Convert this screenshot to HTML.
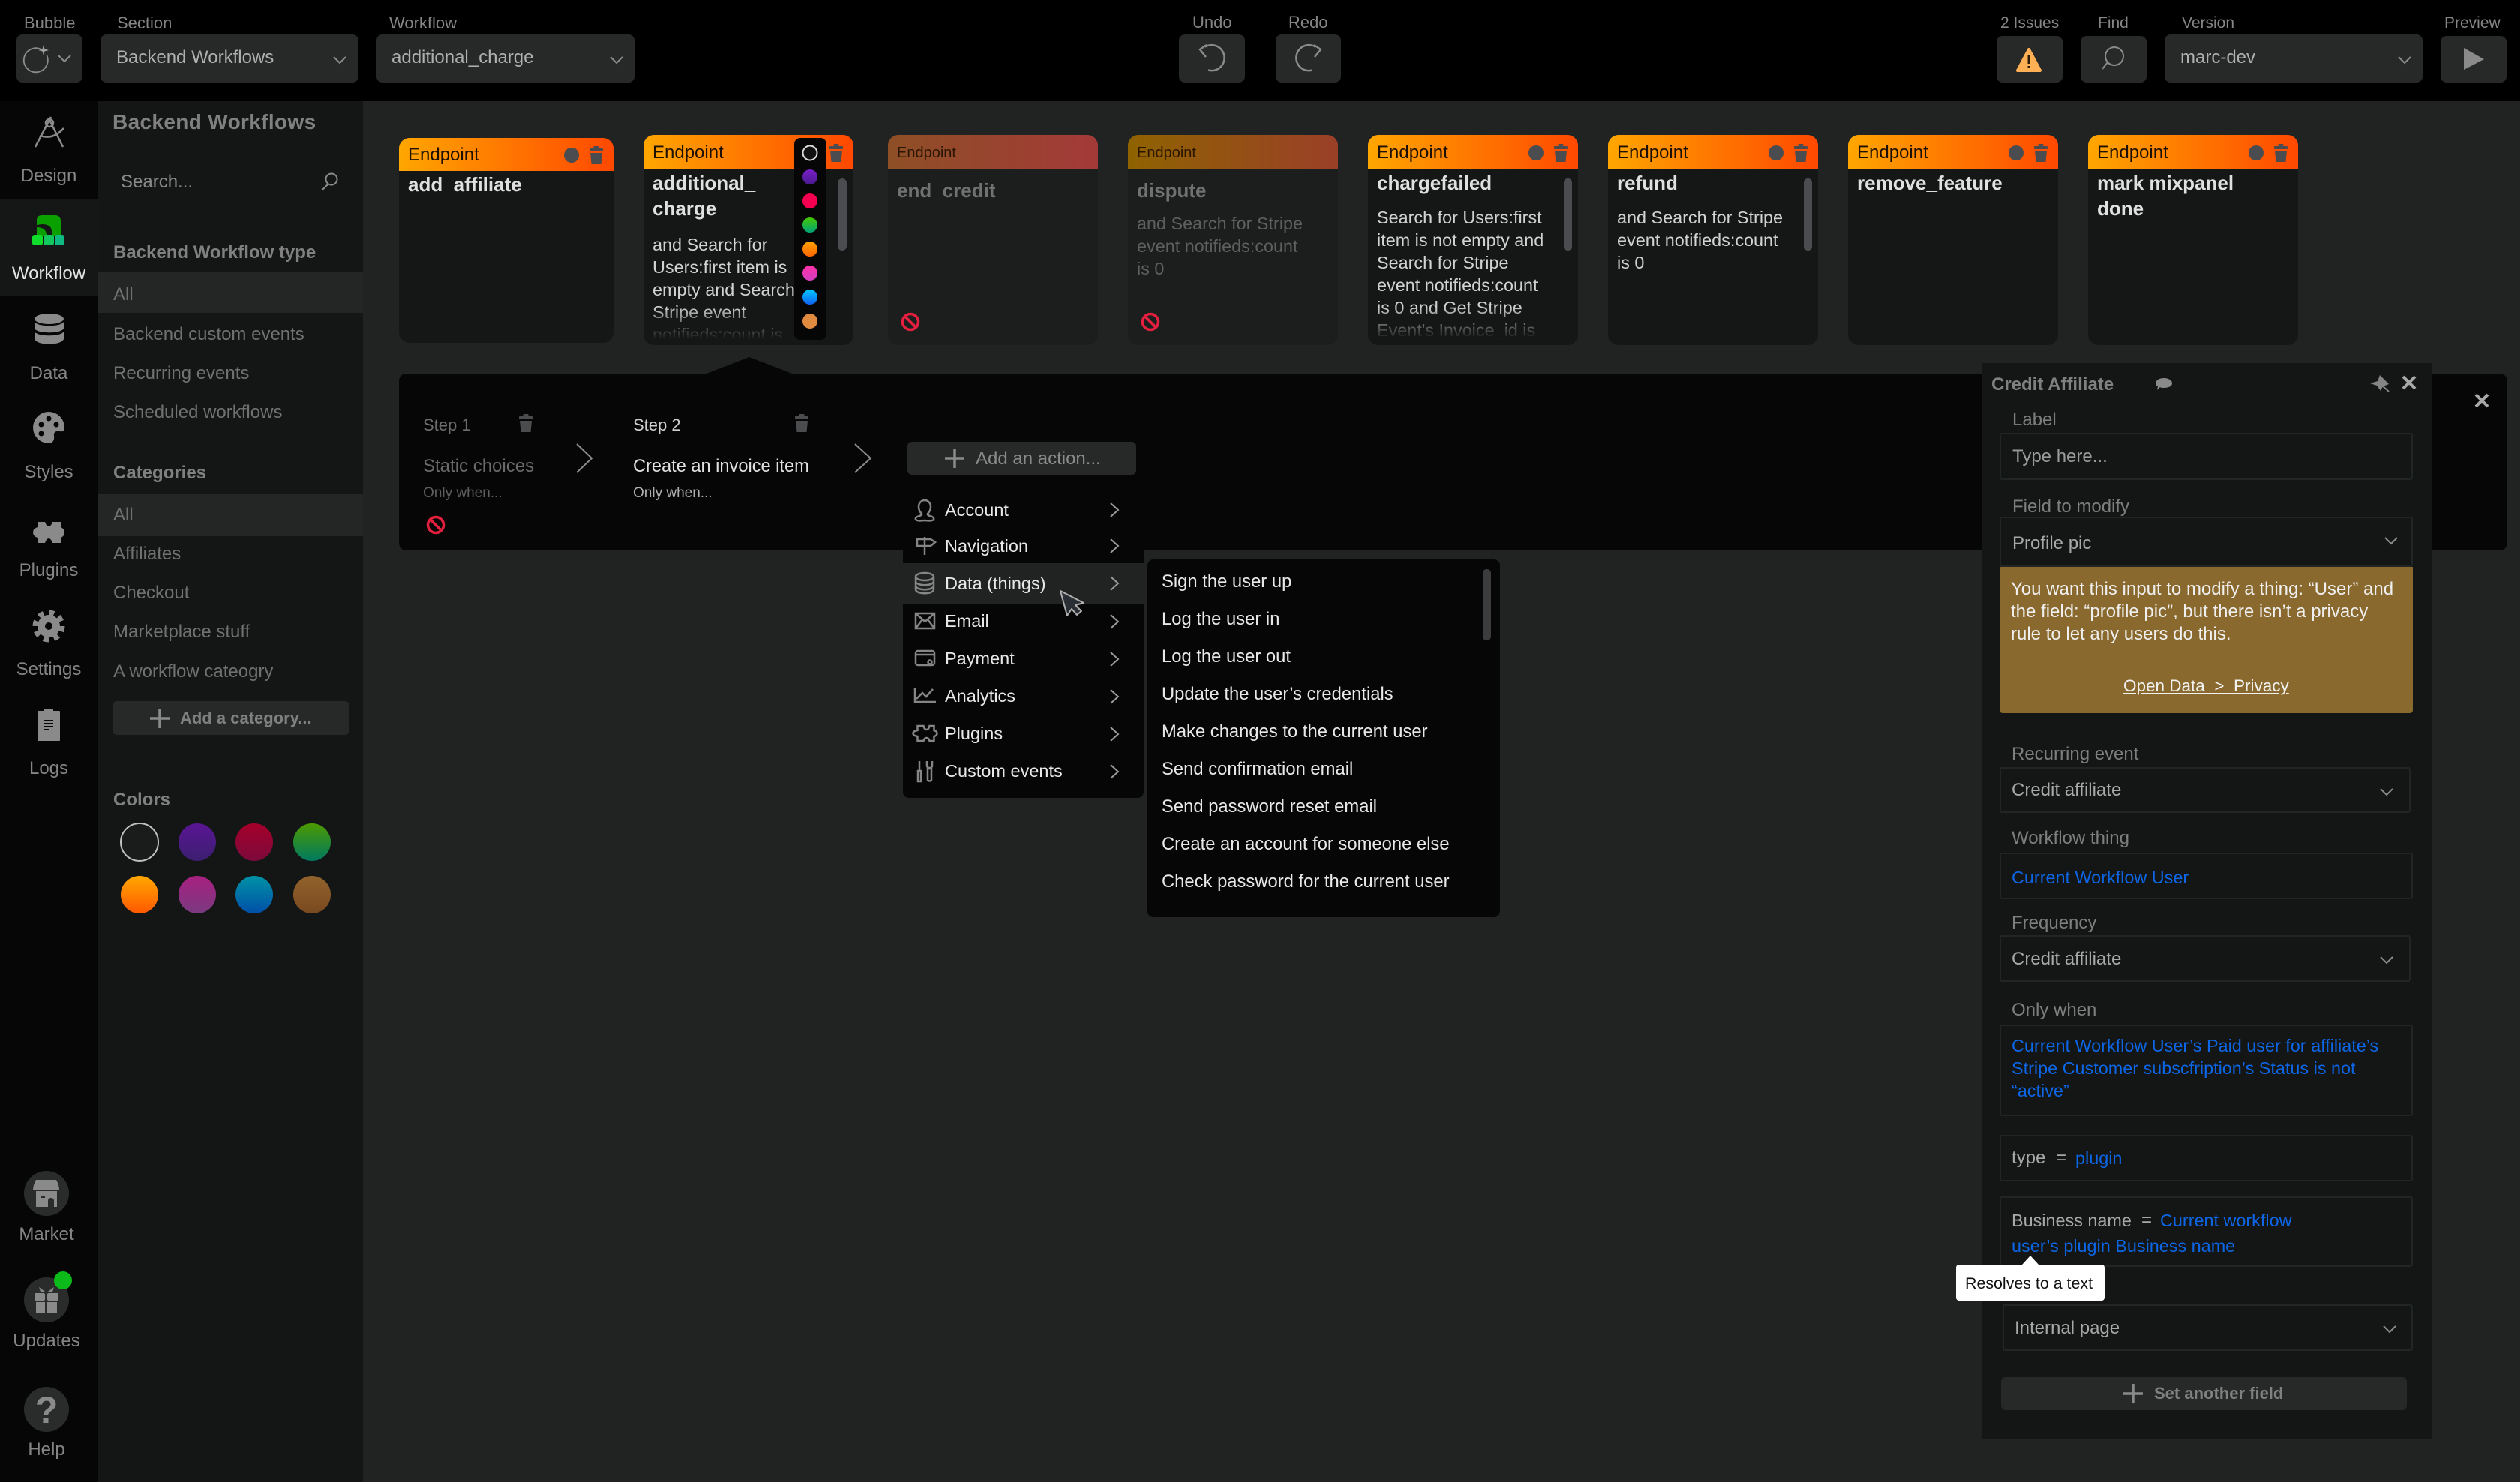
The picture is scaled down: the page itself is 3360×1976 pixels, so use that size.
<!DOCTYPE html>
<html lang="en"><head><meta charset="utf-8"><title>Backend Workflows</title>
<style>
html,body{margin:0;padding:0;width:3360px;height:1976px;overflow:hidden;background:#212323}
body{position:relative;font-family:"Liberation Sans",sans-serif;font-size:24px;color:#8a8a8a}
.b{position:absolute;box-sizing:border-box}
.t{position:absolute;white-space:nowrap;line-height:30px;font-size:24px;margin-top:1px}
.lb{font-size:22px;color:#858585}
.sel{background:#272929;border-radius:8px}
.side{color:#858585;text-align:center;left:0;width:130px}
.li{color:#707272;left:151px}
.h{font-weight:bold;color:#808080}
.card{position:absolute;background:#151717;border-radius:14px;overflow:hidden;width:280px;height:280px;top:180px}
.hd{position:absolute;left:0;top:0;right:0;height:45px;background:linear-gradient(90deg,#ffa600,#ff4800)}
.ep{position:absolute;left:12px;top:9px;line-height:30px;color:#1d1000;font-size:24px}
.ttl{position:absolute;left:12px;top:47px;font-weight:bold;font-size:26px;line-height:34px;color:#e0e0e0;white-space:nowrap}
.bd{position:absolute;left:12px;line-height:30px;font-size:23.4px;color:#d2d2d2;white-space:nowrap}
.fade{position:absolute;left:0;right:0;bottom:0;height:52px;background:linear-gradient(rgba(21,23,23,0),#151717 85%)}
.dim{background:#1c1e1e}
.dim .ep{font-size:20px;color:#2a1500;top:9px}
.dim .ttl{color:#707272;top:57px}
.dim .bd{color:#5e6060}
.m{color:#e8e8e8;left:1260px;font-size:23.5px}
.s{color:#e8e8e8;left:1549px;font-size:23.8px}
.box{border:2px solid #222525;border-radius:3px;background:#141616;left:2666px;width:551px}
.f{color:#7e7e7e;left:2682px}
.v{color:#a8a8a8;left:2682px}
.t.bl{color:#0d66e6;font-size:23.4px}
.btn{background:#272929;border-radius:6px}
</style></head><body>

<!-- top bar -->
<div class="b" style="left:0;top:0;width:3360px;height:134px;background:#000"></div>
<!-- sidebar -->
<div class="b" style="left:0;top:134px;width:130px;height:1842px;background:#060606"></div>
<div class="b" style="left:0;top:265px;width:130px;height:130px;background:#151717"></div>
<!-- panel -->
<div class="b" style="left:130px;top:134px;width:354px;height:1842px;background:#141616"></div>
<div class="b" style="left:130px;top:362px;width:354px;height:55px;background:#242626"></div>
<div class="b" style="left:130px;top:659px;width:354px;height:56px;background:#242626"></div>

<!-- top controls -->
<div class="b sel" style="left:22px;top:46px;width:88px;height:64px"></div>
<div class="b sel" style="left:134px;top:46px;width:344px;height:64px"></div>
<div class="b sel" style="left:502px;top:46px;width:344px;height:64px"></div>
<div class="b sel" style="left:1572px;top:46px;width:88px;height:64px"></div>
<div class="b sel" style="left:1701px;top:46px;width:87px;height:64px"></div>
<div class="b sel" style="left:2662px;top:48px;width:88px;height:62px"></div>
<div class="b sel" style="left:2774px;top:48px;width:88px;height:62px"></div>
<div class="b sel" style="left:2886px;top:46px;width:344px;height:64px"></div>
<div class="b sel" style="left:3254px;top:48px;width:88px;height:62px"></div>

<div class="t lb" style="left:32px;top:15px">Bubble</div>
<div class="t lb" style="left:156px;top:15px">Section</div>
<div class="t lb" style="left:519px;top:15px">Workflow</div>
<div class="t lb" style="left:1590px;top:14px">Undo</div>
<div class="t lb" style="left:1718px;top:14px">Redo</div>
<div class="t lb" style="left:2667px;top:15px;font-size:21px">2 Issues</div>
<div class="t lb" style="left:2797px;top:15px;font-size:21px">Find</div>
<div class="t lb" style="left:2909px;top:15px;font-size:21px">Version</div>
<div class="t lb" style="left:3259px;top:15px;font-size:21px">Preview</div>
<div class="t" style="left:155px;top:61px;color:#b0b0b0">Backend Workflows</div>
<div class="t" style="left:522px;top:61px;color:#b0b0b0">additional_charge</div>
<div class="t" style="left:2907px;top:61px;color:#b0b0b0">marc-dev</div>

<!-- sidebar labels -->
<div class="t side" style="top:219px">Design</div>
<div class="t side" style="top:349px;color:#e4e4e4">Workflow</div>
<div class="t side" style="top:482px">Data</div>
<div class="t side" style="top:614px">Styles</div>
<div class="t side" style="top:745px">Plugins</div>
<div class="t side" style="top:877px">Settings</div>
<div class="t side" style="top:1009px">Logs</div>
<div class="t side" style="top:1630px;width:124px">Market</div>
<div class="t side" style="top:1772px;width:124px">Updates</div>
<div class="t side" style="top:1917px;width:124px">Help</div>

<!-- secondary panel text -->
<div class="t h" style="left:150px;top:147px;font-size:28px;letter-spacing:.35px">Backend Workflows</div>
<div class="t" style="left:161px;top:227px;color:#8a8a8a">Search...</div>
<div class="t h" style="left:151px;top:321px">Backend Workflow type</div>
<div class="t li" style="top:377px">All</div>
<div class="t li" style="top:430px">Backend custom events</div>
<div class="t li" style="top:482px">Recurring events</div>
<div class="t li" style="top:534px">Scheduled workflows</div>
<div class="t h" style="left:151px;top:615px">Categories</div>
<div class="t li" style="top:671px">All</div>
<div class="t li" style="top:723px">Affiliates</div>
<div class="t li" style="top:775px">Checkout</div>
<div class="t li" style="top:827px">Marketplace stuff</div>
<div class="t li" style="top:880px">A workflow cateogry</div>
<div class="b btn" style="left:150px;top:935px;width:316px;height:45px"></div>
<div class="t h" style="left:240px;top:942px;font-size:22px">Add a category...</div>
<div class="t h" style="left:151px;top:1051px">Colors</div>

<!-- cards -->
<div class="card" style="left:532px;top:184px;width:286px;height:273px"><div class="hd" style="height:44px"></div><div class="ep" style="top:8px">Endpoint</div><div class="ttl" style="top:45px">add_affiliate</div></div>

<div class="card" style="left:858px"><div class="hd"></div><div class="ep">Endpoint</div><div class="ttl">additional_<br>charge</div>
<div class="bd" style="top:131px">and Search for<br>Users:first item is<br>empty and Search<br>Stripe event<br>notifieds:count is</div><div class="fade"></div></div>

<div class="card dim" style="left:1184px"><div class="hd" style="background:linear-gradient(90deg,#8e4f26,#a33a38)"></div><div class="ep">Endpoint</div><div class="ttl">end_credit</div></div>

<div class="card dim" style="left:1504px"><div class="hd" style="background:linear-gradient(90deg,#8f6300,#9a3f28)"></div><div class="ep">Endpoint</div><div class="ttl">dispute</div>
<div class="bd" style="top:103px">and Search for Stripe<br>event notifieds:count<br>is 0</div></div>

<div class="card" style="left:1824px"><div class="hd"></div><div class="ep">Endpoint</div><div class="ttl">chargefailed</div>
<div class="bd" style="top:95px">Search for Users:first<br>item is not empty and<br>Search for Stripe<br>event notifieds:count<br>is 0 and Get Stripe<br>Event's Invoice_id is</div><div class="fade"></div></div>

<div class="card" style="left:2144px"><div class="hd"></div><div class="ep">Endpoint</div><div class="ttl">refund</div>
<div class="bd" style="top:95px">and Search for Stripe<br>event notifieds:count<br>is 0</div></div>

<div class="card" style="left:2464px"><div class="hd"></div><div class="ep">Endpoint</div><div class="ttl">remove_feature</div></div>

<div class="card" style="left:2784px"><div class="hd"></div><div class="ep">Endpoint</div><div class="ttl">mark mixpanel<br>done</div></div>

<!-- colour strip -->
<div class="b" style="left:1059px;top:184px;width:43px;height:269px;background:#060606;border-radius:8px"></div>

<!-- step panel -->
<div class="b" style="left:532px;top:498px;width:2811px;height:236px;background:#060606;border-radius:10px"></div>
<div class="t" style="left:564px;top:551px;font-size:22px;color:#6e6e6e">Step 1</div>
<div class="t" style="left:844px;top:551px;font-size:22px;color:#d0d0d0">Step 2</div>
<div class="t" style="left:564px;top:606px;color:#6a6a6a">Static choices</div>
<div class="t" style="left:844px;top:606px;color:#e0e0e0;font-size:23.6px">Create an invoice item</div>
<div class="t" style="left:564px;top:642px;font-size:19px;color:#5e5e5e">Only when...</div>
<div class="t" style="left:844px;top:642px;font-size:19px;color:#b0b0b0">Only when...</div>
<div class="b btn" style="left:1210px;top:589px;width:305px;height:44px"></div>
<div class="t h" style="left:1301px;top:596px;font-weight:normal;color:#8a8a8a">Add an action...</div>

<!-- action menu -->
<div class="b" style="left:1204px;top:645px;width:321px;height:419px;background:#060606;border-radius:0 0 8px 8px"></div>
<div class="b" style="left:1204px;top:751px;width:321px;height:55px;background:#212323"></div>
<div class="t m" style="top:664px">Account</div>
<div class="t m" style="top:712px">Navigation</div>
<div class="t m" style="top:762px">Data (things)</div>
<div class="t m" style="top:812px">Email</div>
<div class="t m" style="top:862px">Payment</div>
<div class="t m" style="top:912px">Analytics</div>
<div class="t m" style="top:962px">Plugins</div>
<div class="t m" style="top:1012px">Custom events</div>

<!-- submenu -->
<div class="b" style="left:1530px;top:746px;width:470px;height:477px;background:#060606;border-radius:8px"></div>
<div class="b" style="left:1977px;top:759px;width:11px;height:95px;background:#3a3c3e;border-radius:5px"></div>
<div class="t s" style="top:760px">Sign the user up</div>
<div class="t s" style="top:810px">Log the user in</div>
<div class="t s" style="top:860px">Log the user out</div>
<div class="t s" style="top:910px">Update the user’s credentials</div>
<div class="t s" style="top:960px">Make changes to the current user</div>
<div class="t s" style="top:1010px">Send confirmation email</div>
<div class="t s" style="top:1060px">Send password reset email</div>
<div class="t s" style="top:1110px">Create an account for someone else</div>
<div class="t s" style="top:1160px">Check password for the current user</div>

<!-- property editor -->
<div class="b" style="left:2642px;top:484px;width:600px;height:1434px;background:#141616"></div>
<div class="t h" style="left:2655px;top:497px">Credit Affiliate</div>
<div class="t f" style="top:544px;left:2683px">Label</div>
<div class="b box" style="top:577px;height:63px"></div>
<div class="t" style="left:2683px;top:593px;color:#9a9a9a">Type here...</div>
<div class="t f" style="top:660px;left:2683px">Field to modify</div>
<div class="b box" style="top:689px;height:67px"></div>
<div class="t v" style="left:2683px;top:709px">Profile pic</div>
<div class="b" style="left:2666px;top:756px;width:551px;height:195px;background:#89692d;border-radius:0 0 4px 4px"></div>
<div class="t" style="left:2681px;top:770px;color:#efefef">You want this input to modify a thing: “User” and</div>
<div class="t" style="left:2681px;top:800px;color:#efefef">the field: “profile pic”, but there isn’t a privacy</div>
<div class="t" style="left:2681px;top:830px;color:#efefef">rule to let any users do this.</div>
<div class="t" style="left:2831px;top:899px;color:#f2f2f2;text-decoration:underline;white-space:pre;font-size:22.5px">Open Data  &gt;  Privacy</div>

<div class="t f" style="top:990px">Recurring event</div>
<div class="b box" style="top:1023px;height:61px;width:548px"></div>
<div class="t v" style="top:1038px">Credit affiliate</div>
<div class="t f" style="top:1102px">Workflow thing</div>
<div class="b box" style="top:1137px;height:62px"></div>
<div class="t bl" style="left:2682px;top:1154px">Current Workflow User</div>
<div class="t f" style="top:1215px">Frequency</div>
<div class="b box" style="top:1247px;height:62px;width:548px"></div>
<div class="t v" style="top:1263px">Credit affiliate</div>
<div class="t f" style="top:1331px">Only when</div>
<div class="b box" style="top:1366px;height:122px"></div>
<div class="t bl" style="left:2682px;top:1378px">Current Workflow User’s Paid user for affiliate’s</div>
<div class="t bl" style="left:2682px;top:1408px">Stripe Customer subscfription’s Status is not</div>
<div class="t bl" style="left:2682px;top:1438px">“active”</div>
<div class="b box" style="top:1513px;height:62px"></div>
<div class="t v" style="top:1528px">type</div>
<div class="t v" style="left:2741px;top:1528px">=</div>
<div class="t bl" style="left:2767px;top:1528px">plugin</div>
<div class="b box" style="top:1595px;height:94px"></div>
<div class="t v" style="top:1611px;font-size:23.4px">Business name</div>
<div class="t v" style="left:2855px;top:1611px">=</div>
<div class="t bl" style="left:2880px;top:1611px">Current workflow</div>
<div class="t bl" style="left:2682px;top:1645px">user’s plugin Business name</div>
<div class="b box" style="left:2670px;top:1739px;height:62px;width:547px"></div>
<div class="t v" style="left:2686px;top:1755px">Internal page</div>
<div class="b btn" style="left:2668px;top:1836px;width:541px;height:44px"></div>
<div class="t h" style="left:2872px;top:1842px;font-size:22px">Set another field</div>

<!-- tooltip -->
<div class="b" style="left:2608px;top:1686px;width:198px;height:48px;background:#fff;border-radius:4px"></div>
<div class="t" style="left:2620px;top:1695px;font-size:21.4px;color:#111">Resolves to a text</div>

<!-- icons -->
<svg width="3360" height="1976" viewBox="0 0 3360 1976" style="position:absolute;left:0;top:0" xmlns="http://www.w3.org/2000/svg">
<defs>
<g id="tr"><rect x="-9" y="-9" width="18" height="4" rx="1"/><rect x="-3.5" y="-12" width="7" height="3" rx="1"/><path d="M-8-3H8L6.5 12H-6.500Z"/></g>
<g id="ch"><path d="M-8-4L0 4L8-4" fill="none" stroke="#8a8a8a" stroke-width="2"/></g>
<g id="mc"><path d="M-5-9L5 0L-5 9" fill="none" stroke="#9a9a9a" stroke-width="2"/></g>
<g id="no"><circle r="10.500" fill="none" stroke="#e5203e" stroke-width="3.500"/><path d="M-7-7L7 7" stroke="#e5203e" stroke-width="3.500"/></g>
<g id="pl"><path d="M-13 0H13M0-13V13" stroke="#8a8a8a" stroke-width="3.500"/></g>
<linearGradient id="g1" x1="0" y1="0" x2="0" y2="1"><stop offset="0" stop-color="#5a1594"/><stop offset="1" stop-color="#3c1f70"/></linearGradient>
<linearGradient id="g2" x1="0" y1="0" x2="0" y2="1"><stop offset="0" stop-color="#a5002a"/><stop offset="1" stop-color="#7c0a3c"/></linearGradient>
<linearGradient id="g3" x1="0" y1="0" x2="0" y2="1"><stop offset="0" stop-color="#4c9a00"/><stop offset="1" stop-color="#007a60"/></linearGradient>
<linearGradient id="g4" x1="0" y1="0" x2="0" y2="1"><stop offset="0" stop-color="#ffa800"/><stop offset="1" stop-color="#ff5800"/></linearGradient>
<linearGradient id="g5" x1="0" y1="0" x2="0" y2="1"><stop offset="0" stop-color="#a82080"/><stop offset="1" stop-color="#7a3a80"/></linearGradient>
<linearGradient id="g6" x1="0" y1="0" x2="0" y2="1"><stop offset="0" stop-color="#0092a6"/><stop offset="1" stop-color="#0050a8"/></linearGradient>
<linearGradient id="g7" x1="0" y1="0" x2="0" y2="1"><stop offset="0" stop-color="#92622c"/><stop offset="1" stop-color="#7a4a20"/></linearGradient>
<linearGradient id="d1" x1="0" y1="0" x2="0" y2="1"><stop offset="0" stop-color="#7a20c8"/><stop offset="1" stop-color="#4a1a90"/></linearGradient>
<linearGradient id="d3" x1="0" y1="0" x2="0" y2="1"><stop offset="0" stop-color="#44c800"/><stop offset="1" stop-color="#00a478"/></linearGradient>
<linearGradient id="d4" x1="0" y1="0" x2="0" y2="1"><stop offset="0" stop-color="#ffa000"/><stop offset="1" stop-color="#ff6400"/></linearGradient>
<linearGradient id="d5" x1="0" y1="0" x2="0" y2="1"><stop offset="0" stop-color="#ff30a8"/><stop offset="1" stop-color="#d040c0"/></linearGradient>
<linearGradient id="d6" x1="0" y1="0" x2="0" y2="1"><stop offset="0" stop-color="#00c8ff"/><stop offset="1" stop-color="#1060f0"/></linearGradient>
</defs>

<!-- top icons -->
<path d="M55 66A16 16 0 1 0 62.500 74" fill="none" stroke="#8a8a8a" stroke-width="1.800"/>
<path d="M58 60L59.500 65.500L65 67L59.500 68.500L58 74L56.500 68.500L51 67L56.500 65.500Z" fill="#a0a0a0"/>
<use href="#ch" x="86" y="78"/><use href="#ch" x="453" y="80"/><use href="#ch" x="822" y="80"/><use href="#ch" x="3206" y="80"/>
<path d="M1607 62.500A17 17 0 1 1 1611 93.500" fill="none" stroke="#8a8a8a" stroke-width="2.500"/>
<path d="M1609 60L1600 66L1608 76" fill="none" stroke="#8a8a8a" stroke-width="2.500"/>
<path d="M1754 62.500A17 17 0 1 0 1750 93.500" fill="none" stroke="#8a8a8a" stroke-width="2.500"/>
<path d="M1752 60L1761 66L1753 76" fill="none" stroke="#8a8a8a" stroke-width="2.500"/>
<path d="M2705 66L2720 94H2690Z" fill="#ffb054" stroke="#ffb054" stroke-width="4" stroke-linejoin="round"/>
<path d="M2705 74V85M2705 88V91" stroke="#2a1c08" stroke-width="3"/>
<circle cx="2819" cy="75" r="12" fill="none" stroke="#8a8a8a" stroke-width="2"/><path d="M2810 83L2803 92" stroke="#8a8a8a" stroke-width="2"/>
<path d="M3285 64L3312 79L3285 93Z" fill="#8a8a8a"/>

<!-- sidebar icons -->
<g fill="none" stroke="#8a8a8a" stroke-width="2.500">
<path d="M68 156L47 196M65 158L84 196"/><circle cx="66" cy="164" r="5"/><path d="M53 181Q71 187 85 171" />
</g>
<path d="M49 300V294Q49 287 56 287H73Q81 287 81 295V314H69V309Q69 299 56 299Z" fill="#0aa000"/>
<path d="M49 303Q62 303 62 314H49Z" fill="#0aa000"/>
<rect x="43" y="313" width="14" height="14" rx="3" fill="#10dc2c"/><rect x="58" y="313" width="14" height="14" rx="3" fill="#12c85e"/><rect x="73" y="313" width="13" height="14" rx="3" fill="#10b882"/>

<g fill="#8a8a8a">
<ellipse cx="65.500" cy="425" rx="19.500" ry="7"/>
<path d="M46 429C50 436 81 436 85 429V438C81 445 50 445 46 438Z"/>
<path d="M46 442C50 449 81 449 85 442V452C81 461 50 461 46 452Z"/>
<path fill-rule="evenodd" d="M65 549A21 21 0 0 1 86 570C86 574 84 576 80 575C75 574 71 576 72 581C73 587 70 591 65 591A21 21 0 0 1 65 549Z"/>
<path d="M50 696H60Q62 702 65 702Q68 702 70 696H81V703Q86 705 86 710Q86 715 81 717V724H70Q68 718 65 718Q62 718 60 724H50V717Q44 715 44 710Q44 705 50 703Z"/>
<circle cx="65" cy="835" r="15"/>
<rect x="50" y="948" width="30" height="40" rx="1"/><rect x="59" y="945" width="12" height="5" rx="2"/>
</g>
<circle cx="65" cy="558" r="3.500" fill="#060606"/><circle cx="55" cy="566" r="3.500" fill="#060606"/><circle cx="75" cy="566" r="3.500" fill="#060606"/><circle cx="55" cy="578" r="3.500" fill="#060606"/>
<circle cx="65" cy="835" r="17.500" fill="none" stroke="#8a8a8a" stroke-width="8" stroke-dasharray="6.900 6.840"/>
<circle cx="65" cy="835" r="5" fill="#060606"/>
<path d="M59 961H71M59 965H71M59 969H71M59 973H66" stroke="#060606" stroke-width="2"/>

<circle cx="62" cy="1591" r="30" fill="#2a2c2c"/>
<path d="M48 1573H75Q79 1580 79 1587H44Q44 1580 48 1573Z" fill="#8a8a8a"/>
<path d="M48 1588H76V1609H48Z" fill="#8a8a8a"/><path d="M64 1609V1601Q64 1597 68 1597Q72 1597 72 1601V1609Z" fill="#2a2c2c"/><rect x="54" y="1595" width="6" height="2" fill="#2a2c2c"/>
<circle cx="62" cy="1733" r="30" fill="#2a2c2c"/>
<g fill="#8a8a8a"><rect x="46" y="1724" width="14" height="10" rx="2"/><rect x="63" y="1724" width="15" height="10" rx="2"/><rect x="48" y="1736" width="12" height="6"/><rect x="63" y="1736" width="13" height="6"/><rect x="48" y="1743" width="12" height="8"/><rect x="63" y="1743" width="13" height="8"/><path d="M52 1716L60 1722H54Z"/><path d="M72 1716L64 1722H70Z"/></g>
<circle cx="84" cy="1707" r="12" fill="#0cbb1a"/>
<circle cx="62" cy="1879" r="30" fill="#2a2c2c"/>

<!-- secondary -->
<circle cx="442" cy="239" r="7.500" fill="none" stroke="#8a8a8a" stroke-width="2"/><path d="M437 246L429 254" stroke="#8a8a8a" stroke-width="2"/>
<use href="#pl" x="213" y="958"/>
<circle cx="186" cy="1123" r="25" fill="#1a1c1c" stroke="#c0c0c0" stroke-width="2"/>
<circle cx="263" cy="1123" r="25" fill="url(#g1)"/><circle cx="339" cy="1123" r="25" fill="url(#g2)"/><circle cx="416" cy="1123" r="25" fill="url(#g3)"/>
<circle cx="186" cy="1193" r="25" fill="url(#g4)"/><circle cx="263" cy="1193" r="25" fill="url(#g5)"/><circle cx="339" cy="1193" r="25" fill="url(#g6)"/><circle cx="416" cy="1193" r="25" fill="url(#g7)"/>

<!-- card controls -->
<g fill="#4a4c50">
<circle cx="762" cy="207" r="10"/><use href="#tr" x="795" y="207"/>
<use href="#tr" x="1115" y="204"/>
<circle cx="2048" cy="204" r="10"/><use href="#tr" x="2081" y="204"/>
<circle cx="2368" cy="204" r="10"/><use href="#tr" x="2401" y="204"/>
<circle cx="2688" cy="204" r="10"/><use href="#tr" x="2721" y="204"/>
<circle cx="3008" cy="204" r="10"/><use href="#tr" x="3041" y="204"/>
<rect x="1117" y="238" width="12" height="96" rx="6"/><rect x="2085" y="238" width="11" height="96" rx="5"/><rect x="2405" y="238" width="11" height="96" rx="5"/>
</g>
<use href="#no" x="1214" y="429"/><use href="#no" x="1534" y="429"/><use href="#no" x="581" y="700"/>

<!-- colour dots -->
<circle cx="1080" cy="204" r="9.500" fill="#111" stroke="#ddd" stroke-width="2"/>
<circle cx="1080" cy="236" r="10" fill="url(#d1)"/><circle cx="1080" cy="268" r="10" fill="#f50050"/><circle cx="1080" cy="300" r="10" fill="url(#d3)"/><circle cx="1080" cy="332" r="10" fill="url(#d4)"/><circle cx="1080" cy="364" r="10" fill="url(#d5)"/><circle cx="1080" cy="396" r="10" fill="url(#d6)"/><circle cx="1080" cy="428" r="10" fill="#e08a40"/>

<!-- step panel -->
<path d="M942 498L999 476L1056 498Z" fill="#060606"/>
<g fill="#4a4c4e"><use href="#tr" x="701" y="564"/><use href="#tr" x="1069" y="564"/></g>
<path d="M769 592L789 611L769 630M1140 592L1161 611L1140 630" fill="none" stroke="#8a8a8a" stroke-width="2"/>
<use href="#pl" x="1273" y="611"/>

<!-- menu chevrons -->
<use href="#mc" x="1486" y="680"/><use href="#mc" x="1486" y="728"/><use href="#mc" x="1486" y="778"/><use href="#mc" x="1486" y="829"/><use href="#mc" x="1486" y="879"/><use href="#mc" x="1486" y="929"/><use href="#mc" x="1486" y="979"/><use href="#mc" x="1486" y="1029"/>

<!-- menu icons -->
<g fill="none" stroke="#858585" stroke-width="2.500">
<path d="M1233 667C1228 667 1225 671 1225 676C1225 680 1227 683 1229 685C1230 687 1226 688 1223 689C1220 691 1220 693 1223 694C1226 695 1230 694 1233 694S1240 695 1243 694C1246 693 1246 691 1243 689C1240 688 1236 687 1237 685C1239 683 1241 680 1241 676C1241 671 1238 667 1233 667Z"/>
<path d="M1233 716V740M1223 719H1241L1247 723L1241 728H1223Z"/>
<ellipse cx="1233" cy="769" rx="12" ry="5"/><path d="M1221 769V786C1221 793 1245 793 1245 786V769M1221 775C1221 782 1245 782 1245 775M1221 781C1221 788 1245 788 1245 781"/>
<rect x="1221" y="818" width="25" height="20"/><path d="M1221 818L1233.500 829L1246 818M1221 838L1230 826M1246 838L1237 826"/>
<rect x="1221" y="868" width="25" height="19" rx="3"/><path d="M1221 873H1246"/><circle cx="1240" cy="883" r="2.500"/>
<path d="M1220 918V936H1248M1222 932L1230 924L1235 929L1244 919"/>
<path d="M1224 968H1232Q1233 973 1236 973Q1239 973 1240 968H1246V974Q1250 975 1250 978Q1250 981 1246 982V988H1240Q1239 984 1236 984Q1233 984 1232 988H1224V982Q1218 981 1218 978Q1218 975 1224 974Z" transform="translate(-.5 0)"/>
<path d="M1226 1015V1028M1224 1028H1228V1042H1224ZM1236 1015V1021C1236 1025 1243 1025 1243 1021V1015M1237 1025H1242V1040C1242 1042 1237 1042 1237 1040Z"/>
</g>
<path d="M1414 788L1445 804L1434 807L1442 815L1436 820L1429 812L1423 821Z" fill="#2a2f36" stroke="#b0b0b0" stroke-width="2" stroke-linejoin="round"/>

<!-- editor icons -->
<path d="M2874 511C2874 507 2879 504 2885 504S2896 507 2896 511S2891 517 2885 517C2883 517 2881 517 2880 516L2876 520L2877 515C2875 514 2874 513 2874 511Z" fill="#8a8a8a"/>
<path d="M3160 511L3170 508L3173 500L3185 512L3177 515L3174 521L3169 514Z" fill="#858585"/><path d="M3176 514L3185 522" stroke="#858585" stroke-width="2"/>
<path d="M3204 502L3220 518M3220 502L3204 518" stroke="#a8a8a8" stroke-width="4"/>
<path d="M3301 526L3317 542M3317 526L3301 542" stroke="#a8a8a8" stroke-width="4"/>
<use href="#ch" x="3188" y="721"/><use href="#ch" x="3182" y="1056"/><use href="#ch" x="3182" y="1280"/><use href="#ch" x="3186" y="1772"/>
<use href="#pl" x="2844" y="1858"/>
<path d="M2696 1686L2707 1674L2718 1686Z" fill="#fff"/>
</svg>

<div class="t" style="left:44px;top:1854px;width:36px;text-align:center;font-size:50px;line-height:50px;font-weight:bold;color:#8a8a8a">?</div>
</body></html>
